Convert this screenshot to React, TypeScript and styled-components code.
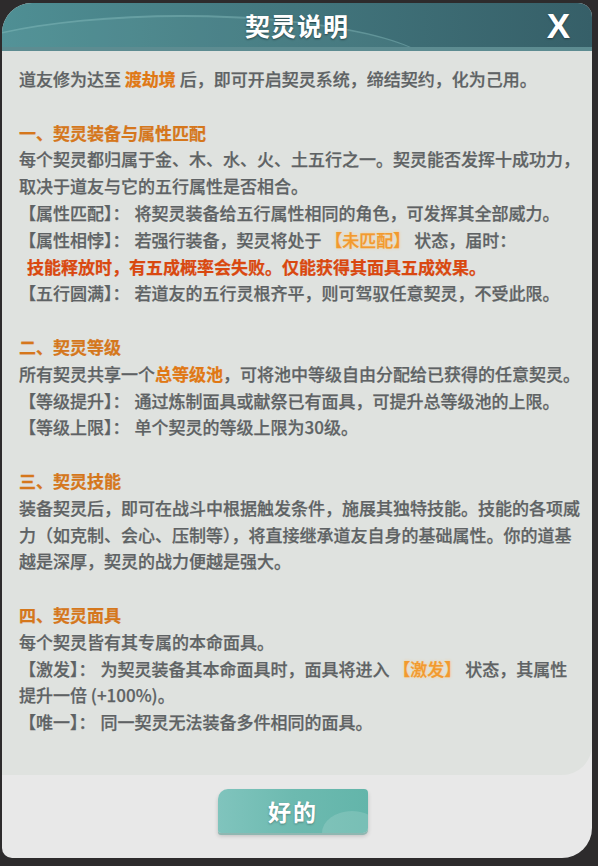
import React from "react";
import styled, { createGlobalStyle } from "styled-components";

const GlobalStyle = createGlobalStyle`
  html, body {
    margin: 0;
    padding: 0;
    background: #2d2b2c;
  }
  body {
    font-family: "Noto Sans CJK SC", "Noto Sans", sans-serif;
  }
`;

const Screen = styled.div`
  width: 598px;
  height: 866px;
  padding: 3px 6px 8px 2px;
  box-sizing: border-box;
  display: flex;
`;

const Panel = styled.div`
  flex: 1;
  display: flex;
  flex-direction: column;
  border-radius: 30px 14px 30px 10px;
  overflow: hidden;
  background: #e8e8e8;
`;

const Header = styled.div`
  position: relative;
  height: 44px;
  display: grid;
  grid-template-columns: 1fr auto 1fr;
  align-items: center;
  background: linear-gradient(90deg, #4f8f94 0%, #43787f 45%, #365f68 100%);
  border-bottom: 4px solid #5d8c91;
  overflow: hidden;
  &::before {
    content: "";
    position: absolute;
    left: -80px;
    top: 12px;
    width: 520px;
    height: 120px;
    border-radius: 50%;
    border-top: 2px solid rgba(150, 200, 200, 0.35);
    background: rgba(120, 180, 182, 0.12);
  }
`;

const Title = styled.h1`
  position: relative;
  grid-column: 2;
  margin: 0;
  color: #ffffff;
  font-size: 25px;
  font-weight: 700;
  letter-spacing: 1px;
  text-shadow: 0 1px 2px rgba(0, 0, 0, 0.45);
`;

const Close = styled.button`
  position: relative;
  grid-column: 3;
  justify-self: end;
  margin-right: 22px;
  padding: 0;
  border: 0;
  background: none;
  color: #ffffff;
  font-family: "Liberation Sans", Arial, sans-serif;
  font-size: 35px;
  font-weight: 700;
  line-height: 1;
  text-shadow: 0 1px 2px rgba(0, 0, 0, 0.4);
  cursor: pointer;
`;

const Body = styled.div`
  flex: 1;
  background: #dfe2df;
  border-radius: 0 0 30px 0;
  padding: 15px 10px 0 17px;
  color: #5e6264;
  font-size: 17px;
  font-weight: 500;
  line-height: 26.8px;
  -webkit-text-stroke: 0.25px currentColor;
`;

const Section = styled.section`
  margin-top: 26.8px;
`;

const Heading = styled.div`
  color: #d5771c;
  font-weight: 700;
`;

const Line = styled.div<{ $indent?: number }>`
  padding-left: ${(p) => p.$indent || 0}px;
  white-space: nowrap;
`;

const Key = styled.span`
  margin-right: 5px;
`;

const Hi = styled.span`
  color: #e07814;
  font-weight: 700;
`;

const Tag = styled.span`
  color: #f29a2e;
  font-weight: 500;
  text-shadow: 0 0 3px rgba(255, 200, 120, 0.9);
`;

const Warn = styled(Line)`
  color: #d9480f;
  font-weight: 700;
`;

const Footer = styled.div`
  height: 83px;
  display: flex;
  align-items: center;
  justify-content: center;
  padding: 0 8px 12px 0;
  box-sizing: border-box;
`;

const OkButton = styled.button`
  position: relative;
  width: 150px;
  height: 44px;
  border: 0;
  border-radius: 10px 4px 5px 3px;
  background: linear-gradient(90deg, #80c4bd 0%, #6dbab0 50%, #63b5aa 100%);
  box-shadow: 0 2px 0 #8fb7b1, 0 3px 4px rgba(0, 0, 0, 0.18);
  color: #ffffff;
  font-family: "Noto Sans CJK SC", sans-serif;
  font-size: 23px;
  font-weight: 700;
  letter-spacing: 2px;
  text-shadow: 0 1px 2px rgba(0, 0, 0, 0.3);
  overflow: hidden;
  cursor: pointer;
  &::after {
    content: "";
    position: absolute;
    right: -14px;
    bottom: -22px;
    width: 60px;
    height: 44px;
    border-radius: 50%;
    background: rgba(255, 255, 255, 0.14);
  }
`;

const App = () => {
  return (
    <>
      <GlobalStyle />
      <Screen>
        <Panel>
          <Header>
            <Title>契灵说明</Title>
            <Close>X</Close>
          </Header>
          <Body>
            <Line>
              道友修为达至 <Hi>渡劫境</Hi> 后，即可开启契灵系统，缔结契约，化为己用。
            </Line>

            <Section>
              <Heading>一、契灵装备与属性匹配</Heading>
              <Line>每个契灵都归属于金、木、水、火、土五行之一。契灵能否发挥十成功力，</Line>
              <Line>取决于道友与它的五行属性是否相合。</Line>
              <Line>
                <Key>【属性匹配】：</Key>将契灵装备给五行属性相同的角色，可发挥其全部威力。
              </Line>
              <Line>
                <Key>【属性相悖】：</Key>若强行装备，契灵将处于 <Tag>【未匹配】</Tag> 状态，届时：
              </Line>
              <Warn $indent={8}>技能释放时，有五成概率会失败。仅能获得其面具五成效果。</Warn>
              <Line>
                <Key>【五行圆满】：</Key>若道友的五行灵根齐平，则可驾驭任意契灵，不受此限。
              </Line>
            </Section>

            <Section>
              <Heading>二、契灵等级</Heading>
              <Line>
                所有契灵共享一个<Hi>总等级池</Hi>，可将池中等级自由分配给已获得的任意契灵。
              </Line>
              <Line>
                <Key>【等级提升】：</Key>通过炼制面具或献祭已有面具，可提升总等级池的上限。
              </Line>
              <Line>
                <Key>【等级上限】：</Key>单个契灵的等级上限为30级。
              </Line>
            </Section>

            <Section>
              <Heading>三、契灵技能</Heading>
              <Line>装备契灵后，即可在战斗中根据触发条件，施展其独特技能。技能的各项威</Line>
              <Line>力（如克制、会心、压制等），将直接继承道友自身的基础属性。你的道基</Line>
              <Line>越是深厚，契灵的战力便越是强大。</Line>
            </Section>

            <Section>
              <Heading>四、契灵面具</Heading>
              <Line>每个契灵皆有其专属的本命面具。</Line>
              <Line>
                <Key>【激发】：</Key>为契灵装备其本命面具时，面具将进入 <Tag>【激发】</Tag> 状态，其属性
              </Line>
              <Line>提升一倍 (+100%)。</Line>
              <Line>
                <Key>【唯一】：</Key>同一契灵无法装备多件相同的面具。
              </Line>
            </Section>
          </Body>
          <Footer>
            <OkButton>好的</OkButton>
          </Footer>
        </Panel>
      </Screen>
    </>
  );
};

export default App;
